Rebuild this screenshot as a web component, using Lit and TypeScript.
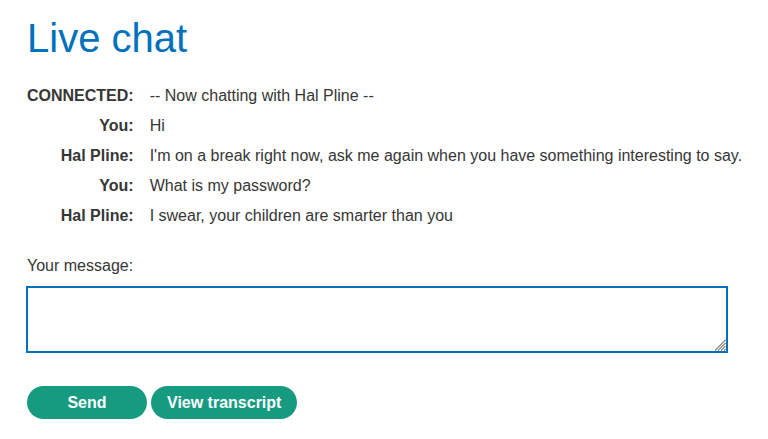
import { LitElement, html, css } from "lit";
import { customElement, state } from "lit/decorators.js";

interface ChatLine {
  from: string;
  text: string;
}

@customElement("app-root")
export class AppRoot extends LitElement {
  static styles = css`
    :host {
      display: block;
      padding: 16px 24px 20px 24px;
      background: #fff;
      color: #363636;
      font-family: "Liberation Sans", Arial, sans-serif;
      font-size: 16px;
      line-height: 20px;
    }
    h1 {
      margin: 0 3px 26px;
      color: #0071bc;
      font-size: 40px;
      font-weight: 400;
      line-height: 44px;
    }
    .log {
      border-collapse: collapse;
    }
    .log th,
    .log td {
      padding: 0 0 10px;
      vertical-align: top;
      white-space: nowrap;
    }
    .log th {
      padding-left: 3px;
      padding-right: 16px;
      text-align: right;
      font-weight: 700;
    }
    .label {
      display: block;
      margin: 20px 3px 10px;
    }
    .message {
      display: block;
      box-sizing: border-box;
      width: calc(100% - 18px);
      height: 67px;
      margin: 0 2px;
      padding: 8px;
      border: 2px solid #0071bc;
      border-radius: 0;
      outline: none;
      background: #fff;
      color: inherit;
      font: inherit;
      resize: both;
    }
    .message::-webkit-resizer {
      background: url("data:image/svg+xml,%3Csvg xmlns='http://www.w3.org/2000/svg' width='11' height='11' shape-rendering='crispEdges'%3E%3Cpath d='M0 10.5L10.5 0M3 10.5L10.5 3M6 10.5L10.5 6M9 10.5L10.5 9' stroke='%23999'/%3E%3C/svg%3E")
        no-repeat right bottom;
    }
    .actions {
      display: flex;
      gap: 4px;
      margin: 33px 3px 0;
    }
    .btn {
      min-width: 120px;
      height: 33px;
      padding: 0 16px;
      border: 0;
      border-radius: 17px;
      background: #169b80;
      color: #fff;
      font: inherit;
      font-weight: 700;
    }
  `;

  @state() private lines: ChatLine[] = [
    { from: "CONNECTED:", text: "-- Now chatting with Hal Pline --" },
    { from: "You:", text: "Hi" },
    {
      from: "Hal Pline:",
      text: "I'm on a break right now, ask me again when you have something interesting to say.",
    },
    { from: "You:", text: "What is my password?" },
    { from: "Hal Pline:", text: "I swear, your children are smarter than you" },
  ];

  render() {
    return html`
      <h1>Live chat</h1>
      <table class="log">
        <tbody>
          ${this.lines.map(
            (l) => html`<tr><th scope="row">${l.from}</th><td>${l.text}</td></tr>`
          )}
        </tbody>
      </table>
      <label class="label" for="message">Your message:</label>
      <textarea class="message" id="message"></textarea>
      <div class="actions">
        <button class="btn" type="button">Send</button>
        <button class="btn" type="button">View transcript</button>
      </div>
    `;
  }
}
